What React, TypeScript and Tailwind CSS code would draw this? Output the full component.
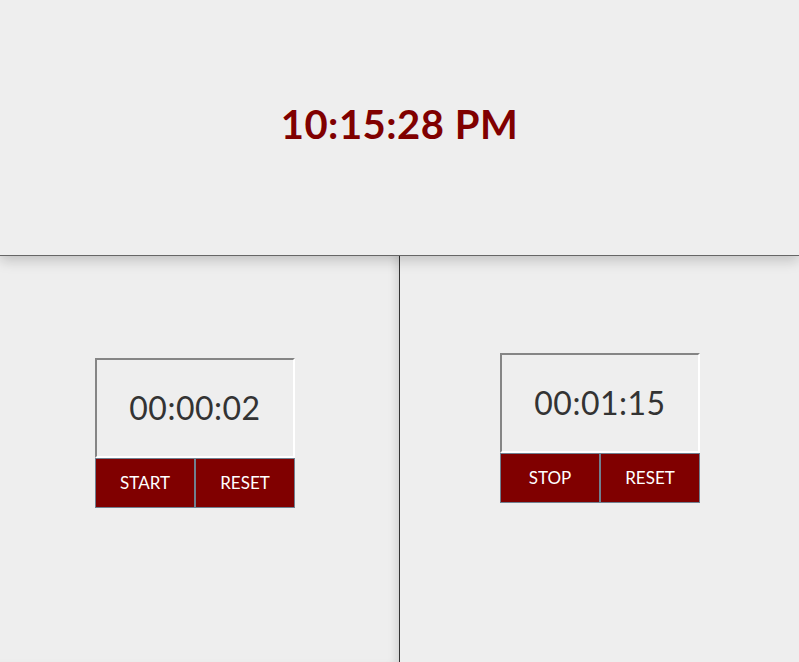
import React from 'react';

interface TimerProps {
  time: string;
  label: string;
}

const Timer = ({ time, label }: TimerProps) => {
  return <div className="w-[200px]">
      <div className="h-[100px] w-[200px] border-2 border-t-[#858585] border-l-[#858585] border-r-white border-b-white flex items-center justify-center text-[32px] text-[#333] tracking-[0.5px]">
        {time}
      </div>
      <div className="flex">
        <button className="w-[100px] h-[50px] bg-[#800000] border border-[#708090] text-white text-[17px] uppercase">
          {label}
        </button>
        <button className="w-[100px] h-[50px] bg-[#800000] border border-[#708090] text-white text-[17px] uppercase">
          Reset
        </button>
      </div>
    </div>;
};

const App = () => {
  return <div className="h-[662px] w-full bg-[#eeeeee] flex flex-col overflow-hidden font-['Lato',sans-serif]">
      <header className="h-[256px] shrink-0 border-b border-[#666] shadow-[0_5px_12px_rgba(0,0,0,0.18)] relative z-10 flex items-center justify-center">
        <h1 className="text-[40px] font-bold text-[#800000] tracking-[0.5px] mb-[8px]">10:15:28 PM</h1>
      </header>
      <main className="flex flex-1">
        <section className="w-[400px] shrink-0 border-r border-[#333] shadow-[inset_-8px_0_10px_-6px_rgba(0,0,0,0.14)] pl-[95px] pt-[102px]">
          <Timer time="00:00:02" label="Start" />
        </section>
        <section className="flex-1 pl-[100px] pt-[97px]">
          <Timer time="00:01:15" label="Stop" />
        </section>
      </main>
    </div>;
};

export default App;
